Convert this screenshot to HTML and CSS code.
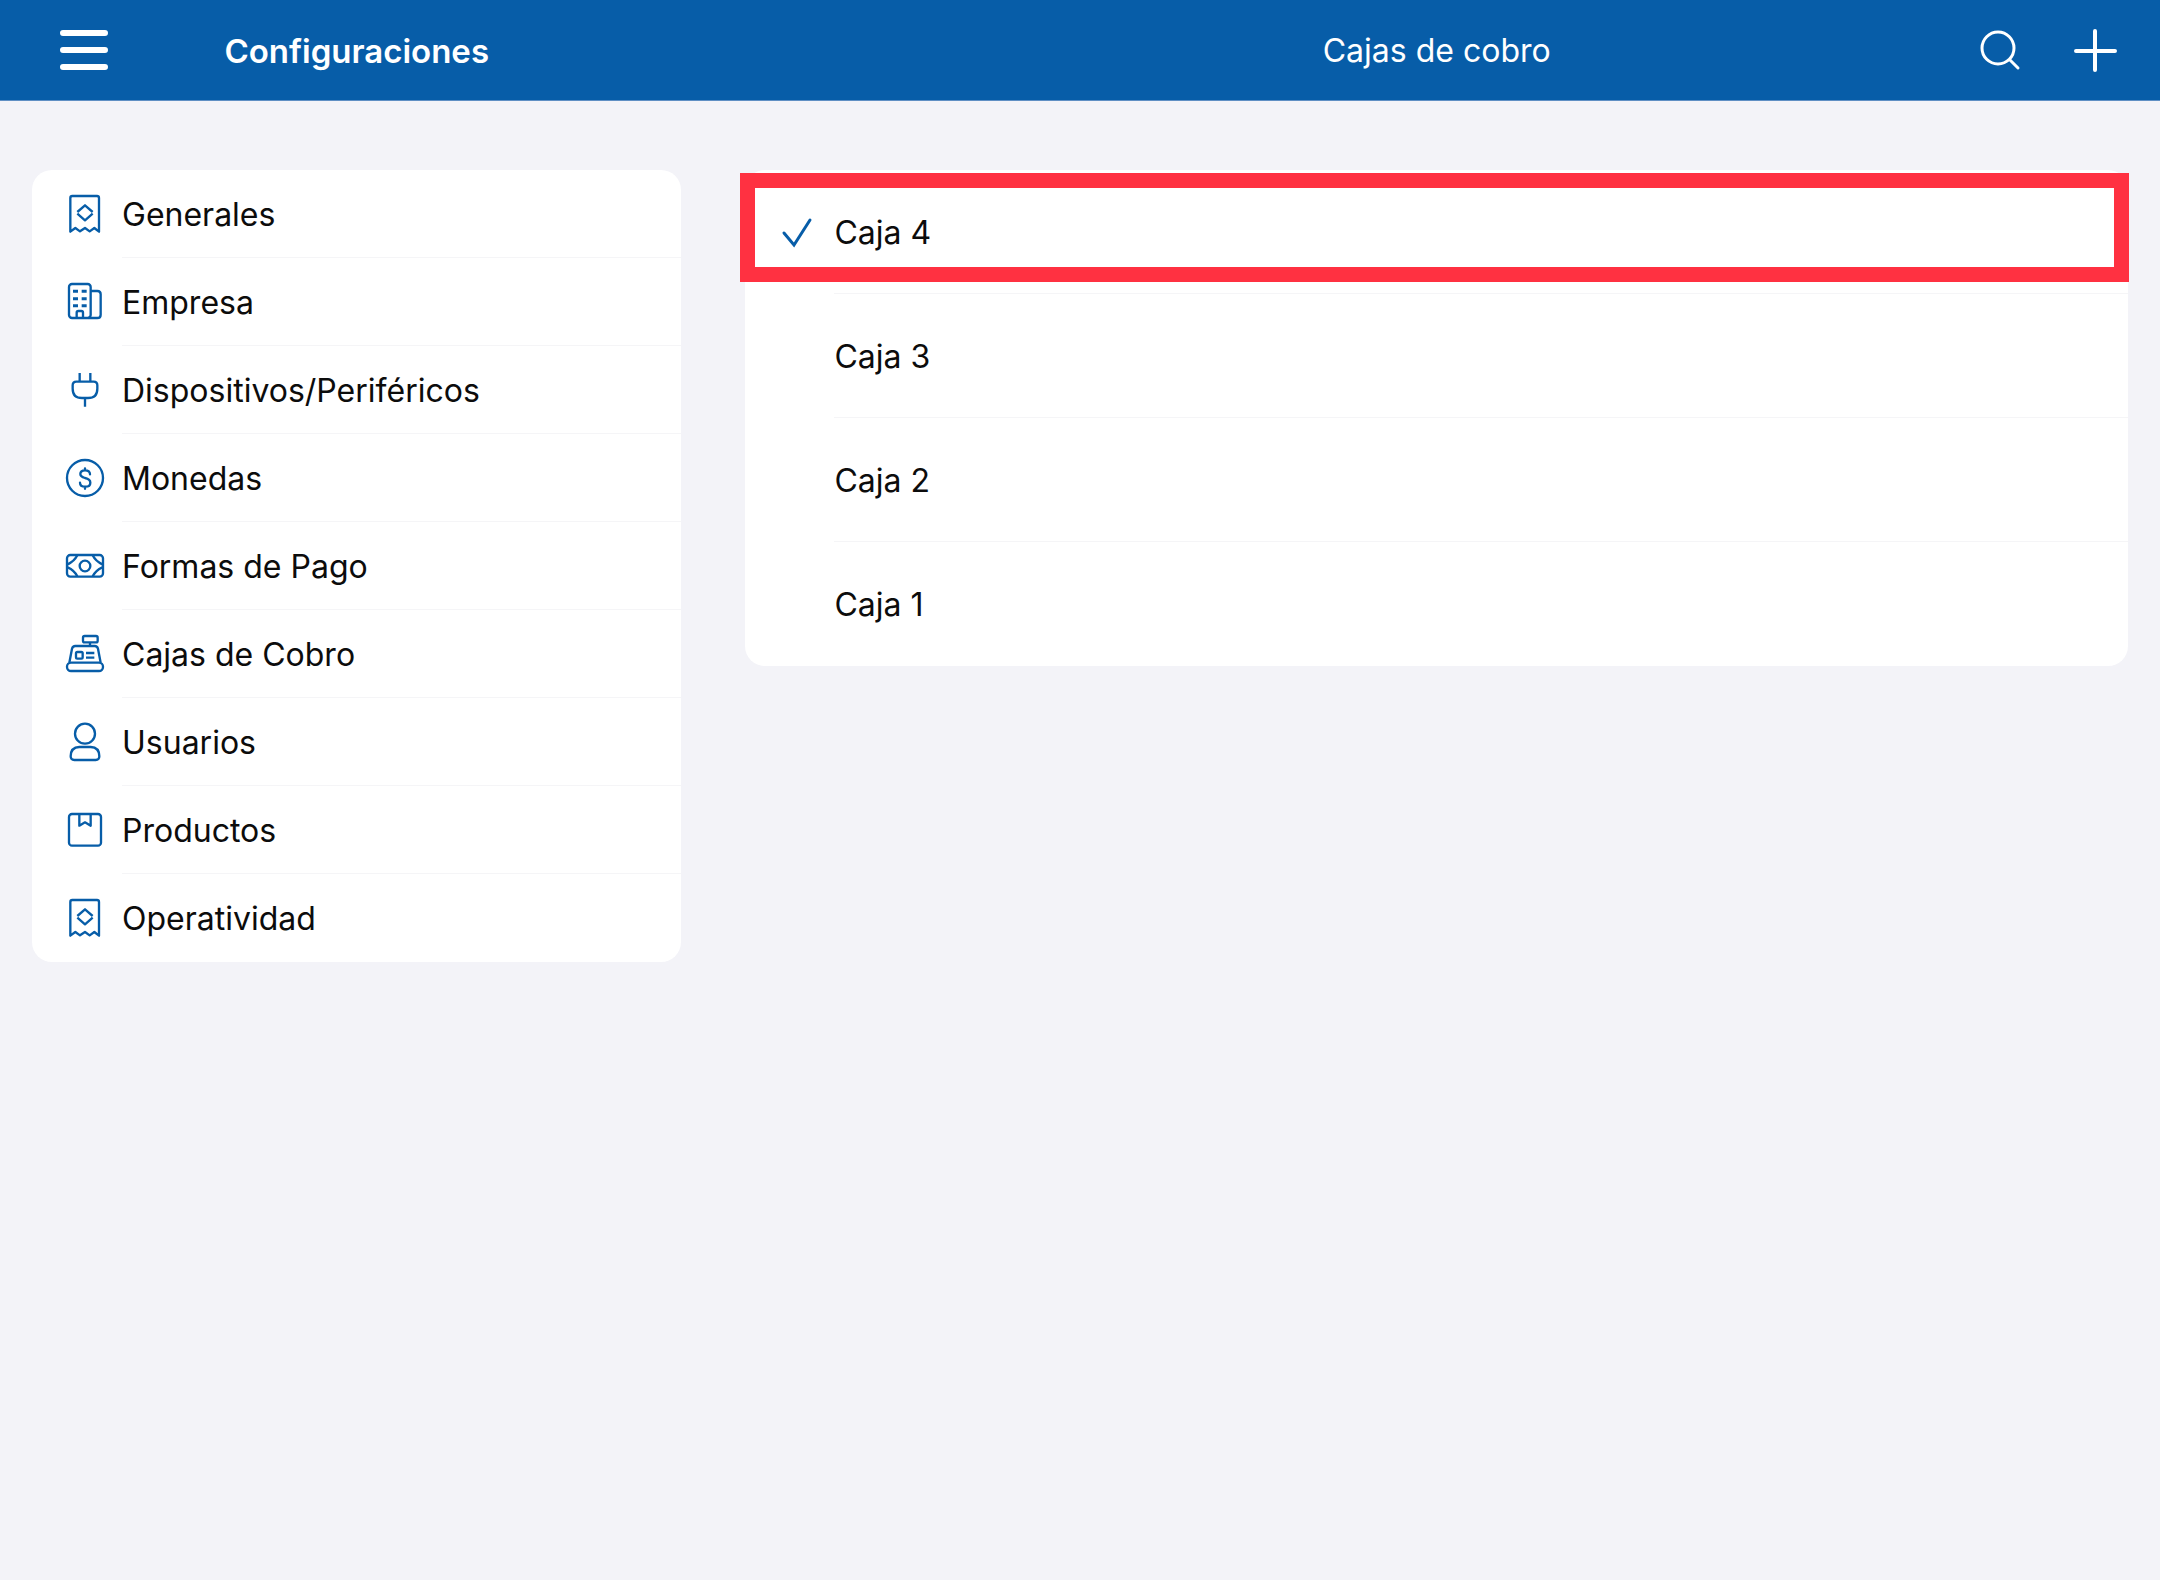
FILE: index.html
```html
<!DOCTYPE html>
<html lang="es">
<head>
<meta charset="utf-8">
<meta name="viewport" content="width=device-width, initial-scale=1">
<title>Configuraciones</title>
<link rel="stylesheet" href="styles.css">
</head>
<body>
<svg class="sprite" aria-hidden="true">
  <symbol id="i-receipt" viewBox="0 0 120 120">
    <path d="M16 113V12q0-6 6-6H96q6 0 6 6V113L88 102 74 112 60 102 45 112 31 102Z"/>
    <path d="M37 54L60 34 83 54M37 59L60 79 83 59"/>
  </symbol>
  <symbol id="i-building" viewBox="0 0 120 120">
    <rect x="12" y="6" width="65" height="102" rx="9"/>
    <path d="M77 27H97q10 0 10 10V98q0 10-10 10H70M35 108V92q0-5 5-5H49q5 0 5 5V108"/>
    <path stroke-width="9" d="M24 28H39M50 28H65M24 50H39M50 50H65M24 71H39M50 71H65"/>
  </symbol>
  <symbol id="i-plug" viewBox="0 0 120 120">
    <path d="M44 9V34M76 9V34M60 84V110M34 35H86q11 0 11 11V56q0 28-28 28H51q-28 0-28-28V46q0-11 11-11Z"/>
  </symbol>
  <symbol id="i-coin" viewBox="0 0 120 120">
    <circle cx="60" cy="60" r="54"/>
    <path stroke-linecap="round" d="M75 49C75 41 68 37 60 37 52 37 46 41 46 48 46 56 53 58 60 60 69 62 76 66 76 74 76 82 69 86 61 86 52 86 45 82 45 74M60 31V37M60 86V92"/>
  </symbol>
  <symbol id="i-bill" viewBox="0 0 120 120">
    <rect x="6" y="27" width="108" height="65" rx="10"/>
    <circle cx="60" cy="60" r="16"/>
    <path d="M37 28Q28 46 8 55M37 91Q28 73 8 64M83 28Q92 46 112 55M83 91Q92 73 112 64"/>
  </symbol>
  <symbol id="i-register" viewBox="0 0 120 120">
    <rect x="54" y="6" width="44" height="19" rx="5"/>
    <path d="M75 25V36M13 86L21 44Q23 36 31 36H89Q97 36 99 44L107 86M63 57H88M63 71H88"/>
    <rect x="33" y="54" width="20" height="20" rx="4"/>
    <rect x="6" y="86" width="108" height="25" rx="12"/>
  </symbol>
  <symbol id="i-user" viewBox="0 0 120 120">
    <circle cx="60" cy="35" r="30"/>
    <path d="M43 75H77Q103 76 103 103 103 114 92 114H28Q17 114 17 103 17 76 43 75Z"/>
  </symbol>
  <symbol id="i-product" viewBox="0 0 120 120">
    <rect x="12" y="12" width="96" height="95" rx="9"/>
    <path d="M43 12V47L60 37 77 47V12"/>
  </symbol>
</svg>

<header class="topbar">
  <div class="topbar-side">
    <button class="icon-button" type="button" aria-label="Menú">
      <svg viewBox="0 0 50 50" stroke-width="6"><path d="M4 8H46M4 25H46M4 42H46"/></svg>
    </button>
    <h1 class="title title-strong">Configuraciones</h1>
  </div>
  <div class="topbar-main">
    <h2 class="title">Cajas de cobro</h2>
    <div class="actions">
      <button class="icon-button" type="button" aria-label="Buscar">
        <svg viewBox="0 0 50 50" stroke-width="3"><circle cx="22" cy="23" r="16"/><path d="M34 35L42 43"/></svg>
      </button>
      <button class="icon-button" type="button" aria-label="Agregar">
        <svg viewBox="0 0 50 50" stroke-width="4"><path d="M25 6V45M6 26H45"/></svg>
      </button>
    </div>
  </div>
</header>

<main class="content">
  <nav class="card" aria-label="Configuraciones">
    <ul class="list">
      <li><a class="menu-row" href="#generales"><svg class="icon"><use href="#i-receipt"/></svg><span class="label">Generales</span></a></li>
      <li><a class="menu-row" href="#empresa"><svg class="icon"><use href="#i-building"/></svg><span class="label">Empresa</span></a></li>
      <li><a class="menu-row" href="#dispositivos"><svg class="icon"><use href="#i-plug"/></svg><span class="label">Dispositivos/Periféricos</span></a></li>
      <li><a class="menu-row" href="#monedas"><svg class="icon"><use href="#i-coin"/></svg><span class="label">Monedas</span></a></li>
      <li><a class="menu-row" href="#formas"><svg class="icon"><use href="#i-bill"/></svg><span class="label">Formas de Pago</span></a></li>
      <li><a class="menu-row" href="#cajas"><svg class="icon"><use href="#i-register"/></svg><span class="label">Cajas de Cobro</span></a></li>
      <li><a class="menu-row" href="#usuarios"><svg class="icon"><use href="#i-user"/></svg><span class="label">Usuarios</span></a></li>
      <li><a class="menu-row" href="#productos"><svg class="icon"><use href="#i-product"/></svg><span class="label">Productos</span></a></li>
      <li><a class="menu-row" href="#operatividad"><svg class="icon"><use href="#i-receipt"/></svg><span class="label">Operatividad</span></a></li>
    </ul>
  </nav>

  <section class="card" aria-label="Cajas de cobro">
    <ul class="list">
      <li class="highlighted"><button class="box-row" type="button" aria-pressed="true"><svg class="icon" viewBox="0 0 40 40" stroke-width="3" stroke-linecap="round"><path d="M6 21L16 33 32 8"/></svg><span class="label">Caja 4</span></button></li>
      <li><button class="box-row" type="button" aria-pressed="false"><span class="icon"></span><span class="label">Caja 3</span></button></li>
      <li><button class="box-row" type="button" aria-pressed="false"><span class="icon"></span><span class="label">Caja 2</span></button></li>
      <li><button class="box-row" type="button" aria-pressed="false"><span class="icon"></span><span class="label">Caja 1</span></button></li>
    </ul>
  </section>
</main>
</body>
</html>
```
FILE: styles.css
```css
* {
  box-sizing: border-box;
}

body {
  margin: 0;
  min-height: 100vh;
  background: #f3f3f8;
  color: #0c0c0c;
  font-family: Inter, "Liberation Sans", sans-serif;
  font-size: 32px;
  line-height: 44px;
}

.sprite {
  display: none;
}

/* Header and content share the same two columns */
.topbar,
.content {
  display: grid;
  grid-template-columns: 31fr 66fr;
  column-gap: 64px;
  padding: 0 32px;
}

.topbar {
  min-height: 101px;
  background: #075da8;
  border-bottom: 1px solid #5f8fc4;
  color: #fff;
}

.topbar-side,
.topbar-main {
  display: grid;
  grid-template-columns: 1fr auto 1fr;
  align-items: center;
}

.topbar-side {
  padding: 0 27px;
}

.title {
  grid-column: 2;
  margin: 0;
  padding-top: 1px;
  font-size: 32px;
  font-weight: 400;
}

.title-strong {
  font-size: 33px;
  font-weight: 600;
}

.actions {
  display: flex;
  justify-content: flex-end;
  gap: 44px;
  padding-right: 8px;
}

.icon-button {
  width: 50px;
  height: 50px;
  padding: 0;
  border: 0;
  background: none;
  color: inherit;
}

.icon-button svg {
  display: block;
  fill: none;
  stroke: currentColor;
  stroke-linecap: round;
}

.content {
  align-items: start;
  padding-top: 69px;
  padding-bottom: 69px;
}

.card {
  background: #fff;
  border-radius: 20px;
}

.list {
  margin: 0;
  padding: 0;
  list-style: none;
}

.menu-row,
.box-row {
  display: flex;
  align-items: stretch;
  gap: 16px;
  width: 100%;
  padding: 0 0 0 33px;
  border: 0;
  background: none;
  color: inherit;
  font: inherit;
  text-align: left;
  text-decoration: none;
}

.menu-row {
  gap: 17px;
}

.icon {
  flex: none;
  align-self: center;
  width: 40px;
  height: 40px;
  fill: none;
  stroke: #075da8;
}

.menu-row .icon {
  stroke-width: 7px;
  stroke-linejoin: round;
}

.label {
  flex: 1;
  padding: 23px 0 20px;
  border-bottom: 1px solid #f5f5f7;
}

.box-row .label {
  padding: 41px 0 38px;
}

.list li:last-child .label {
  border-bottom-color: transparent;
}

.highlighted {
  position: relative;
}

/* Frame drawn over the selected register */
.highlighted::after {
  content: "";
  position: absolute;
  inset: 3px -1px 12px -5px;
  border: 15px solid #ff3141;
  pointer-events: none;
}
```
